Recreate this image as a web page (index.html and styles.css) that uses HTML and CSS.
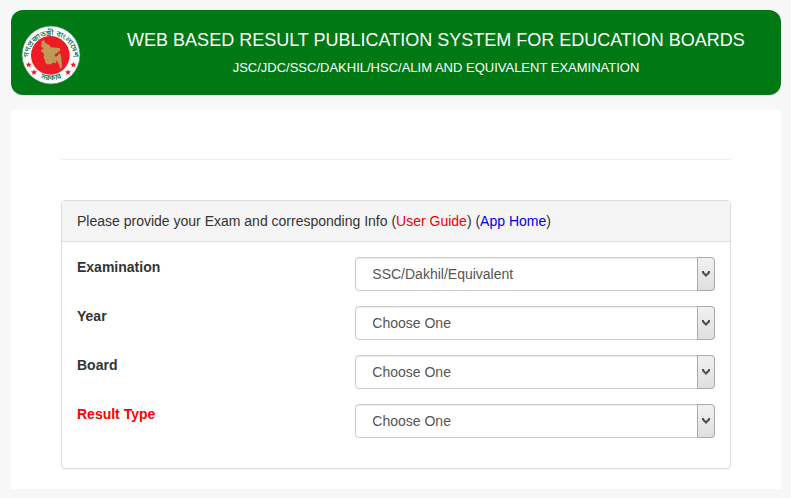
FILE: index.html
```html
<!DOCTYPE html>
<html lang="en">
<head>
<meta charset="utf-8">
<title>Web Based Result Publication System for Education Boards</title>
<link rel="stylesheet" href="styles.css">
</head>
<body>
<header class="banner">
  <svg class="seal" viewBox="63 75 180 180" role="img" aria-label="Government seal">
    <defs>
      <path id="arc-top" d="M88 190A67 67 0 1 1 218 190"/>
      <path id="arc-bottom" d="M77 165A76 76 0 0 0 229 165"/>
      <path id="star" d="M0-9 2.400-3 9-3 4 2 5.500 8 0 4.500-5.500 8-4 2-9-3-2.400-3Z"/>
    </defs>
    <circle cx="153" cy="165" r="87" fill="#fff" stroke="#2f8f68" stroke-width="2"/>
    <circle cx="151" cy="166" r="58" fill="#ed1c24"/>
    <path fill="#c09a59" d="M124 124 132 121 136 129 147 134 152 142 179 144 181 151 174 157 164 163 166 170 173 168 176 160 181 162 184 174 186 202 181 206 175 190 170 180 168 189 158 188 153 193 142 193 136 188 135 180 131 174 132 161 123 154 123 150 131 146 122 138 125 132Z"/>
    <g class="seal-text" lang="bn">
      <text><textPath href="#arc-top" startOffset="50%">গণপ্রজাতন্ত্রী বাংলাদেশ</textPath></text>
      <text><textPath href="#arc-bottom" startOffset="50%">সরকার</textPath></text>
    </g>
    <g fill="#ed1c24">
      <use href="#star" x="86" y="194"/>
      <use href="#star" x="102" y="217"/>
      <use href="#star" x="204" y="217"/>
      <use href="#star" x="220" y="194"/>
    </g>
  </svg>
  <div class="banner-text">
    <h1>WEB BASED RESULT PUBLICATION SYSTEM FOR EDUCATION BOARDS</h1>
    <p>JSC/JDC/SSC/DAKHIL/HSC/ALIM AND EQUIVALENT EXAMINATION</p>
  </div>
</header>
<main class="content">
  <hr class="rule">
  <form class="panel">
    <div class="panel-heading">Please provide your Exam and corresponding Info (<a class="guide" href="#">User Guide</a>) (<a class="home" href="#">App Home</a>)</div>
    <div class="panel-body">
      <div class="field">
        <label for="exam">Examination</label>
        <div class="picker">
          <select id="exam"><option>SSC/Dakhil/Equivalent</option></select>
          <span class="drop"><svg viewBox="0 0 8 7"><path d="M0 0h2v1l2 2 2-2V0h2v2L4 6 0 2Z"/></svg></span>
        </div>
      </div>
      <div class="field">
        <label for="year">Year</label>
        <div class="picker">
          <select id="year"><option>Choose One</option></select>
          <span class="drop"><svg viewBox="0 0 8 7"><path d="M0 0h2v1l2 2 2-2V0h2v2L4 6 0 2Z"/></svg></span>
        </div>
      </div>
      <div class="field">
        <label for="board">Board</label>
        <div class="picker">
          <select id="board"><option>Choose One</option></select>
          <span class="drop"><svg viewBox="0 0 8 7"><path d="M0 0h2v1l2 2 2-2V0h2v2L4 6 0 2Z"/></svg></span>
        </div>
      </div>
      <div class="field">
        <label class="required" for="type">Result Type</label>
        <div class="picker">
          <select id="type"><option>Choose One</option></select>
          <span class="drop"><svg viewBox="0 0 8 7"><path d="M0 0h2v1l2 2 2-2V0h2v2L4 6 0 2Z"/></svg></span>
        </div>
      </div>
    </div>
  </form>
</main>
</body>
</html>
```
FILE: styles.css
```css
* {
  box-sizing: border-box;
}

body {
  margin: 0;
  padding: 10px 10px 9px 11px;
  background: #f7f7f7;
  color: #333;
  font: 14px/20px "Liberation Sans", Arial, sans-serif;
}

.banner {
  display: flex;
  align-items: center;
  padding: 15px 0 10px 10px;
  border-radius: 12px;
  background: #007814;
  color: #fff;
}

.seal {
  flex: none;
  width: 60px;
  height: 60px;
}

.seal-text {
  fill: #0b6b48;
  font: 500 23px "Noto Sans Bengali", "Noto Sans", sans-serif;
  text-anchor: middle;
}

.banner-text {
  flex: 1;
  padding: 0 0 2px 10px;
  text-align: center;
}

h1,
p {
  margin: 0;
  font-weight: normal;
}

h1 {
  margin-bottom: 8px;
  font-size: 18px;
  line-height: 20px;
}

.banner-text p {
  font-size: 13px;
}

.content {
  margin-top: 15px;
  padding: 49px 50px 20px;
  background: #fff;
}

.rule {
  margin: 0 0 40px;
  border: 0;
  border-top: 1px solid #eee;
}

.panel {
  border: 1px solid #ddd;
  border-radius: 4px;
  box-shadow: 0 1px 1px rgba(0, 0, 0, 0.05);
}

.panel-heading {
  padding: 10px 15px;
  border-bottom: 1px solid #ddd;
  border-radius: 3px 3px 0 0;
  background: #f5f5f5;
}

a {
  text-decoration: none;
}

.guide {
  color: #e00;
}

.home {
  color: #00e;
}

.panel-body {
  padding: 15px 0;
}

.field {
  display: grid;
  grid-template-columns: 5fr 7fr;
  margin-bottom: 15px;
}

label {
  padding: 0 15px;
  font-weight: bold;
}

.required {
  color: #f00;
}

.picker {
  position: relative;
  margin: 0 15px;
}

select {
  display: block;
  width: 100%;
  height: 34px;
  padding: 0 28px 0 16px;
  appearance: none;
  border: 1px solid #ccc;
  border-radius: 4px;
  background: #fff;
  box-shadow: inset 0 1px 1px rgba(0, 0, 0, 0.08);
  color: #555;
  font: inherit;
}

.drop {
  position: absolute;
  inset: 0 0 0 auto;
  display: flex;
  align-items: center;
  justify-content: center;
  width: 18px;
  border: 1px solid #aaa;
  border-radius: 0 4px 4px 0;
  background: linear-gradient(#f1f1f1, #dfdfdf);
  pointer-events: none;
}

.drop svg {
  width: 8px;
  height: 7px;
  fill: #505050;
}
```
